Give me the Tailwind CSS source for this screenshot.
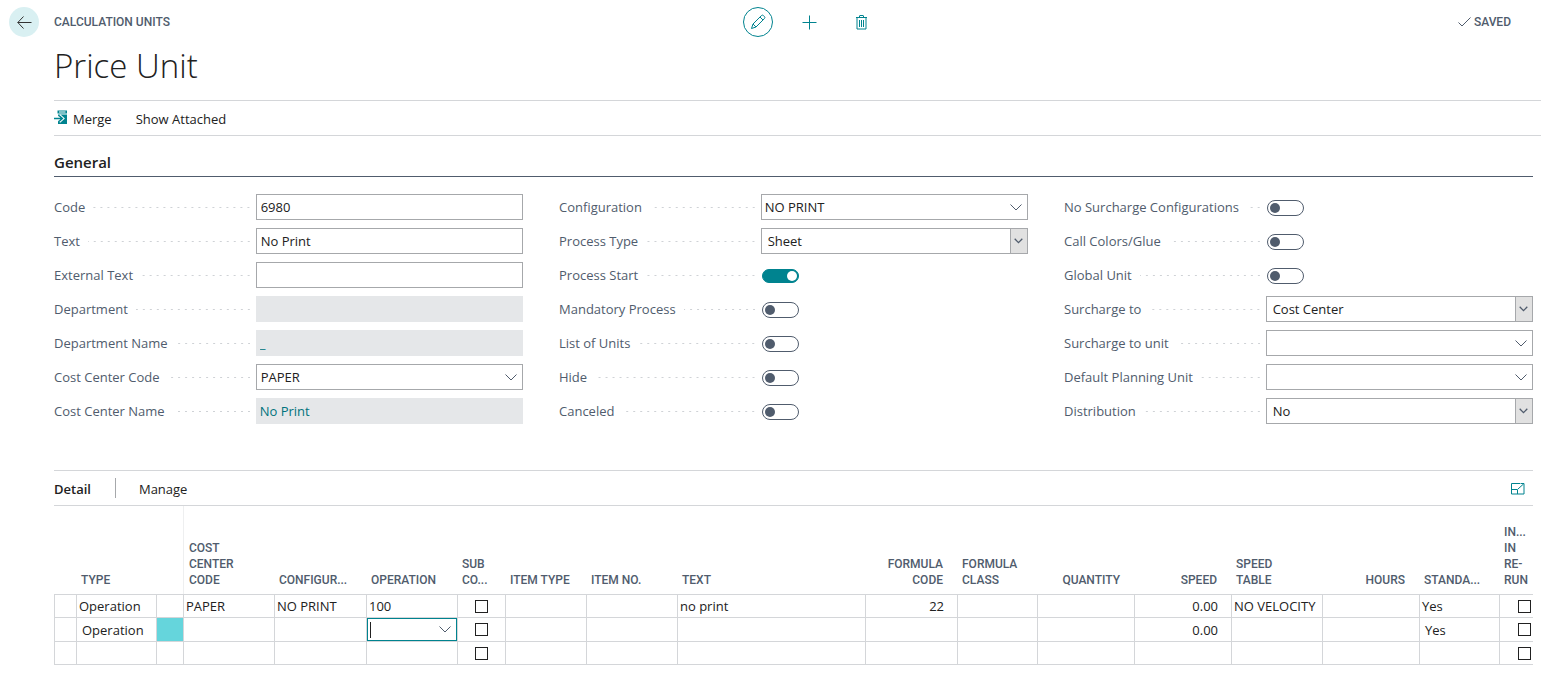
<!DOCTYPE html>
<html lang="en">
  <head>
    <meta charset="utf-8"/>
    <meta content="width=device-width, initial-scale=1.0" name="viewport"/>
    <title>Price Unit - Calculation Units</title>
    <script src="https://cdn.jsdelivr.net/npm/@tailwindcss/browser@4"></script>
  </head>
  <body class="bg-white font-['Open_Sans','Noto_Sans',sans-serif] text-[13px] leading-4 text-[#212121] overflow-x-hidden">
    <!-- Shared icons -->
    <svg class="hidden">
      <symbol id="chevron" viewBox="0 0 12 7"><path d="M.5 .5 6 6 11.5 .5" fill="none" stroke="currentColor"/></symbol>
      <symbol id="arrow" viewBox="0 0 9 6"><path d="M.7 .8 4.500 4.600 8.300 .8" fill="none" stroke="currentColor" stroke-width="1.300"/></symbol>
    </svg>

    <header class="flex items-center h-11 font-['Roboto',sans-serif] text-xs font-medium text-[#505c6d]">
      <div class="flex items-center w-[48.2%] pl-[9px] gap-[15px]">
        <button aria-label="Back" class="flex items-center justify-center size-[30px] rounded-full bg-[#d9f0f2] text-[#333]">
          <svg class="w-[15px] h-[13px]" viewBox="0 0 15 13" fill="none" stroke="currentColor"><path d="M6.500 .5.800 6.500l5.700 6M.800 6.500H14.500"/></svg>
        </button>
        <span>CALCULATION UNITS</span>
      </div>
      <div class="flex items-center gap-[22px] text-[#00838f]">
        <button aria-label="Edit" class="flex items-center justify-center size-[30px] rounded-full border border-[#00838f]">
          <svg class="size-4" viewBox="0 0 16 16" fill="none" stroke="currentColor"><path d="M1.500 14.500 3 10 11.300 1.700a1.600 1.600 0 0 1 2.300 0l.7.700a1.600 1.600 0 0 1 0 2.300L6 13zM3 10l3 3M10 3l3 3"/></svg>
        </button>
        <button aria-label="New" class="flex items-center justify-center size-[30px]">
          <svg class="size-[15px]" viewBox="0 0 15 15" fill="none" stroke="currentColor"><path d="M7.500 .5v14M.5 7.500h14"/></svg>
        </button>
        <button aria-label="Delete" class="flex items-center justify-center size-[30px]">
          <svg class="w-[13px] h-[15px]" viewBox="0 0 13 15" fill="none" stroke="currentColor"><path d="M1 2.500h11M4.500 2.500v-1.500q0-.5.5-.5h3q.5 0 .5.500v1.500M2 2.500v11.500h9v-11.500M4.500 5v7M6.500 5v7M8.500 5v7"/></svg>
        </button>
      </div>
      <div class="flex flex-1 items-center justify-end pr-[30px] gap-[3px]">
        <svg class="w-[13px] h-[10px]" viewBox="0 0 13 10" fill="none" stroke="currentColor"><path d="M.5 5.500 4 9 12.500 .5"/></svg>
        <span>SAVED</span>
      </div>
    </header>

    <main class="pl-[54px]">
      <h1 class="h-14 pt-[2px] text-[33px] leading-10 font-light">Price Unit</h1>

      <nav class="flex items-center h-9 pt-px border-y border-[#d4d6d9] gap-6">
        <button class="flex items-center gap-[5px]">
          <svg class="w-[14px] h-[15px] -mt-[2px]" viewBox="0 0 14 15"><path d="M3.500 .5h9.500v3H3.500zM4 4.500h9V14H4z" fill="#00838f"/><path d="M5 2h6.500" stroke="#fff"/><path d="M0 8.500h8M5 5.500l3.300 3L5 11.500" fill="none" stroke="#fff" stroke-width="3.500"/><path d="M0 8.500h8M5 5.500l3.300 3L5 11.500" fill="none" stroke="#00838f" stroke-width="1.500"/></svg>
          Merge
        </button>
        <button>Show Attached</button>
      </nav>

      <div class="pr-2">
        <h2 class="h-[41px] pt-4 border-b border-[#505c6d] text-[15px] leading-5 font-semibold">General</h2>

        <form class="grid grid-cols-3 gap-x-9 pt-[17px] text-[#505c6d]">
          <div class="flex flex-col gap-2">
            <div class="flex items-center h-[26px]">
              <div class="flex items-center w-[43%] pr-[6px] gap-2"><label for="code" class="whitespace-nowrap">Code</label><i class="flex-1 h-px bg-[linear-gradient(to_right,transparent_5px,#cfd2d6_5px)] bg-[length:7px_1px] bg-right"></i></div>
              <input id="code" value="6980" class="w-[57%] h-[26px] border border-[#a6a8ab] px-1 text-[#212121]"/>
            </div>
            <div class="flex items-center h-[26px]">
              <div class="flex items-center w-[43%] pr-[6px] gap-2"><label for="text" class="whitespace-nowrap">Text</label><i class="flex-1 h-px bg-[linear-gradient(to_right,transparent_5px,#cfd2d6_5px)] bg-[length:7px_1px] bg-right"></i></div>
              <input id="text" value="No Print" class="w-[57%] h-[26px] border border-[#a6a8ab] px-1 text-[#212121]"/>
            </div>
            <div class="flex items-center h-[26px]">
              <div class="flex items-center w-[43%] pr-[6px] gap-2"><label for="external" class="whitespace-nowrap">External Text</label><i class="flex-1 h-px bg-[linear-gradient(to_right,transparent_5px,#cfd2d6_5px)] bg-[length:7px_1px] bg-right"></i></div>
              <input id="external" class="w-[57%] h-[26px] border border-[#a6a8ab] px-1 text-[#212121]"/>
            </div>
            <div class="flex items-center h-[26px]">
              <div class="flex items-center w-[43%] pr-[6px] gap-2"><label for="department" class="whitespace-nowrap">Department</label><i class="flex-1 h-px bg-[linear-gradient(to_right,transparent_5px,#cfd2d6_5px)] bg-[length:7px_1px] bg-right"></i></div>
              <input id="department" readonly class="w-[57%] h-[26px] bg-[#e5e7e9] px-1"/>
            </div>
            <div class="flex items-center h-[26px]">
              <div class="flex items-center w-[43%] pr-[6px] gap-2"><label for="department-name" class="whitespace-nowrap">Department Name</label><i class="flex-1 h-px bg-[linear-gradient(to_right,transparent_5px,#cfd2d6_5px)] bg-[length:7px_1px] bg-right"></i></div>
              <input id="department-name" readonly value="_" class="w-[57%] h-[26px] bg-[#e5e7e9] px-1 text-[#00737d]"/>
            </div>
            <div class="flex items-center h-[26px]">
              <div class="flex items-center w-[43%] pr-[6px] gap-2"><label for="cost-code" class="whitespace-nowrap">Cost Center Code</label><i class="flex-1 h-px bg-[linear-gradient(to_right,transparent_5px,#cfd2d6_5px)] bg-[length:7px_1px] bg-right"></i></div>
              <div class="flex items-center w-[57%] h-[26px] border border-[#a6a8ab]">
                <input id="cost-code" value="PAPER" class="flex-1 min-w-0 px-1 text-[#212121]"/>
                <button type="button" aria-label="Choose cost center" class="px-[5px]"><svg class="w-3 h-[7px]"><use href="#chevron"/></svg></button>
              </div>
            </div>
            <div class="flex items-center h-[26px]">
              <div class="flex items-center w-[43%] pr-[6px] gap-2"><label for="cost-name" class="whitespace-nowrap">Cost Center Name</label><i class="flex-1 h-px bg-[linear-gradient(to_right,transparent_5px,#cfd2d6_5px)] bg-[length:7px_1px] bg-right"></i></div>
              <input id="cost-name" readonly value="No Print" class="w-[57%] h-[26px] bg-[#e5e7e9] px-1 text-[#00737d]"/>
            </div>
          </div>

          <div class="flex flex-col gap-2">
            <div class="flex items-center h-[26px]">
              <div class="flex items-center w-[43%] pr-[6px] gap-2"><label for="configuration" class="whitespace-nowrap">Configuration</label><i class="flex-1 h-px bg-[linear-gradient(to_right,transparent_5px,#cfd2d6_5px)] bg-[length:7px_1px] bg-right"></i></div>
              <div class="flex items-center w-[57%] h-[26px] border border-[#a6a8ab]">
                <input id="configuration" value="NO PRINT" class="flex-1 min-w-0 px-[3px] text-[#212121]"/>
                <button type="button" aria-label="Choose configuration" class="px-[5px]"><svg class="w-3 h-[7px]"><use href="#chevron"/></svg></button>
              </div>
            </div>
            <div class="flex items-center h-[26px]">
              <div class="flex items-center w-[43%] pr-[6px] gap-2"><label for="process-type" class="whitespace-nowrap">Process Type</label><i class="flex-1 h-px bg-[linear-gradient(to_right,transparent_5px,#cfd2d6_5px)] bg-[length:7px_1px] bg-right"></i></div>
              <div class="relative w-[57%]">
                <select id="process-type" class="block appearance-none w-full h-[26px] border border-[#a6a8ab] pl-[6px] text-[#212121]"><option>Sheet</option></select>
                <span class="absolute right-0 inset-y-0 flex items-center justify-center w-[18px] border border-[#a6a8ab] bg-[#e1e1e1] pointer-events-none"><svg class="w-[9px] h-[6px]"><use href="#arrow"/></svg></span>
              </div>
            </div>
            <div class="flex items-center h-[26px]">
              <div class="flex items-center w-[43%] pr-[6px] gap-2"><label for="process-start" class="whitespace-nowrap">Process Start</label><i class="flex-1 h-px bg-[linear-gradient(to_right,transparent_5px,#cfd2d6_5px)] bg-[length:7px_1px] bg-right"></i></div>
              <input id="process-start" type="checkbox" checked class="appearance-none flex items-center w-[37px] h-4 ml-px mt-px px-[2px] rounded-full border border-[#505c6d] before:size-[10px] before:rounded-full before:bg-[#505c6d] checked:justify-end checked:h-[14px] checked:border-[#00838f] checked:bg-[#00838f] checked:px-px checked:before:bg-white"/>
            </div>
            <div class="flex items-center h-[26px]">
              <div class="flex items-center w-[43%] pr-[6px] gap-2"><label for="mandatory" class="whitespace-nowrap">Mandatory Process</label><i class="flex-1 h-px bg-[linear-gradient(to_right,transparent_5px,#cfd2d6_5px)] bg-[length:7px_1px] bg-right"></i></div>
              <input id="mandatory" type="checkbox" class="appearance-none flex items-center w-[37px] h-4 ml-px mt-px px-[2px] rounded-full border border-[#505c6d] before:size-[10px] before:rounded-full before:bg-[#505c6d]"/>
            </div>
            <div class="flex items-center h-[26px]">
              <div class="flex items-center w-[43%] pr-[6px] gap-2"><label for="list-units" class="whitespace-nowrap">List of Units</label><i class="flex-1 h-px bg-[linear-gradient(to_right,transparent_5px,#cfd2d6_5px)] bg-[length:7px_1px] bg-right"></i></div>
              <input id="list-units" type="checkbox" class="appearance-none flex items-center w-[37px] h-4 ml-px mt-px px-[2px] rounded-full border border-[#505c6d] before:size-[10px] before:rounded-full before:bg-[#505c6d]"/>
            </div>
            <div class="flex items-center h-[26px]">
              <div class="flex items-center w-[43%] pr-[6px] gap-2"><label for="hide" class="whitespace-nowrap">Hide</label><i class="flex-1 h-px bg-[linear-gradient(to_right,transparent_5px,#cfd2d6_5px)] bg-[length:7px_1px] bg-right"></i></div>
              <input id="hide" type="checkbox" class="appearance-none flex items-center w-[37px] h-4 ml-px mt-px px-[2px] rounded-full border border-[#505c6d] before:size-[10px] before:rounded-full before:bg-[#505c6d]"/>
            </div>
            <div class="flex items-center h-[26px]">
              <div class="flex items-center w-[43%] pr-[6px] gap-2"><label for="canceled" class="whitespace-nowrap">Canceled</label><i class="flex-1 h-px bg-[linear-gradient(to_right,transparent_5px,#cfd2d6_5px)] bg-[length:7px_1px] bg-right"></i></div>
              <input id="canceled" type="checkbox" class="appearance-none flex items-center w-[37px] h-4 ml-px mt-px px-[2px] rounded-full border border-[#505c6d] before:size-[10px] before:rounded-full before:bg-[#505c6d]"/>
            </div>
          </div>

          <div class="flex flex-col gap-2">
            <div class="flex items-center h-[26px]">
              <div class="flex items-center w-[43%] pr-[6px] gap-2"><label for="no-surcharge" class="whitespace-nowrap">No Surcharge Configurations</label><i class="flex-1 h-px bg-[linear-gradient(to_right,transparent_5px,#cfd2d6_5px)] bg-[length:7px_1px] bg-right"></i></div>
              <input id="no-surcharge" type="checkbox" class="appearance-none flex items-center w-[37px] h-4 ml-px mt-px px-[2px] rounded-full border border-[#505c6d] before:size-[10px] before:rounded-full before:bg-[#505c6d]"/>
            </div>
            <div class="flex items-center h-[26px]">
              <div class="flex items-center w-[43%] pr-[6px] gap-2"><label for="call-colors" class="whitespace-nowrap">Call Colors/Glue</label><i class="flex-1 h-px bg-[linear-gradient(to_right,transparent_5px,#cfd2d6_5px)] bg-[length:7px_1px] bg-right"></i></div>
              <input id="call-colors" type="checkbox" class="appearance-none flex items-center w-[37px] h-4 ml-px mt-px px-[2px] rounded-full border border-[#505c6d] before:size-[10px] before:rounded-full before:bg-[#505c6d]"/>
            </div>
            <div class="flex items-center h-[26px]">
              <div class="flex items-center w-[43%] pr-[6px] gap-2"><label for="global-unit" class="whitespace-nowrap">Global Unit</label><i class="flex-1 h-px bg-[linear-gradient(to_right,transparent_5px,#cfd2d6_5px)] bg-[length:7px_1px] bg-right"></i></div>
              <input id="global-unit" type="checkbox" class="appearance-none flex items-center w-[37px] h-4 ml-px mt-px px-[2px] rounded-full border border-[#505c6d] before:size-[10px] before:rounded-full before:bg-[#505c6d]"/>
            </div>
            <div class="flex items-center h-[26px]">
              <div class="flex items-center w-[43%] pr-[6px] gap-2"><label for="surcharge-to" class="whitespace-nowrap">Surcharge to</label><i class="flex-1 h-px bg-[linear-gradient(to_right,transparent_5px,#cfd2d6_5px)] bg-[length:7px_1px] bg-right"></i></div>
              <div class="relative w-[57%]">
                <select id="surcharge-to" class="block appearance-none w-full h-[26px] border border-[#a6a8ab] pl-[6px] text-[#212121]"><option>Cost Center</option></select>
                <span class="absolute right-0 inset-y-0 flex items-center justify-center w-[18px] border border-[#a6a8ab] bg-[#e1e1e1] pointer-events-none"><svg class="w-[9px] h-[6px]"><use href="#arrow"/></svg></span>
              </div>
            </div>
            <div class="flex items-center h-[26px]">
              <div class="flex items-center w-[43%] pr-[6px] gap-2"><label for="surcharge-unit" class="whitespace-nowrap">Surcharge to unit</label><i class="flex-1 h-px bg-[linear-gradient(to_right,transparent_5px,#cfd2d6_5px)] bg-[length:7px_1px] bg-right"></i></div>
              <div class="flex items-center w-[57%] h-[26px] border border-[#a6a8ab]">
                <input id="surcharge-unit" class="flex-1 min-w-0 px-1 text-[#212121]"/>
                <button type="button" aria-label="Choose surcharge unit" class="px-[5px]"><svg class="w-3 h-[7px]"><use href="#chevron"/></svg></button>
              </div>
            </div>
            <div class="flex items-center h-[26px]">
              <div class="flex items-center w-[43%] pr-[6px] gap-2"><label for="planning-unit" class="whitespace-nowrap">Default Planning Unit</label><i class="flex-1 h-px bg-[linear-gradient(to_right,transparent_5px,#cfd2d6_5px)] bg-[length:7px_1px] bg-right"></i></div>
              <div class="flex items-center w-[57%] h-[26px] border border-[#a6a8ab]">
                <input id="planning-unit" class="flex-1 min-w-0 px-1 text-[#212121]"/>
                <button type="button" aria-label="Choose planning unit" class="px-[5px]"><svg class="w-3 h-[7px]"><use href="#chevron"/></svg></button>
              </div>
            </div>
            <div class="flex items-center h-[26px]">
              <div class="flex items-center w-[43%] pr-[6px] gap-2"><label for="distribution" class="whitespace-nowrap">Distribution</label><i class="flex-1 h-px bg-[linear-gradient(to_right,transparent_5px,#cfd2d6_5px)] bg-[length:7px_1px] bg-right"></i></div>
              <div class="relative w-[57%]">
                <select id="distribution" class="block appearance-none w-full h-[26px] border border-[#a6a8ab] pl-[6px] text-[#212121]"><option>No</option></select>
                <span class="absolute right-0 inset-y-0 flex items-center justify-center w-[18px] border border-[#a6a8ab] bg-[#e1e1e1] pointer-events-none"><svg class="w-[9px] h-[6px]"><use href="#arrow"/></svg></span>
              </div>
            </div>
          </div>
        </form>

        <!-- Detail lines -->
        <div class="flex items-center h-9 mt-[46px] pt-px border-y border-[#d4d6d9]">
          <h2 class="pr-6 font-semibold">Detail</h2>
          <button class="relative pl-6 before:absolute before:left-0 before:-top-[3px] before:h-5 before:w-px before:bg-[#a6a8ab]">Manage</button>
          <button aria-label="Expand" class="ml-auto mr-2 text-[#00838f]">
            <svg class="w-[14px] h-3" viewBox="0 0 14 12" fill="none" stroke="currentColor"><path d="M9 .5H.5v10.500h12.500V4M.5 6.500h6V11M7 6l5.500-5M9.500 .5h3.500v3.500"/></svg>
          </button>
        </div>

        <table class="w-full table-fixed border-separate border-spacing-0">
          <colgroup>
            <col class="w-[22px]"/><col class="w-[80px]"/><col class="w-[27px]"/><col class="w-[91px]"/><col class="w-[92px]"/><col class="w-[91px]"/>
            <col class="w-[48px]"/><col class="w-[81px]"/><col class="w-[91px]"/><col class="w-[188px]"/><col class="w-[92px]"/><col class="w-[80px]"/>
            <col class="w-[97px]"/><col class="w-[97px]"/><col class="w-[91px]"/><col class="w-[97px]"/><col class="w-[80px]"/><col class="w-[34px]"/>
          </colgroup>
          <thead>
            <tr class="h-[88px] text-left font-['Roboto',sans-serif] text-xs text-[#505c6d] *:p-0 *:pb-[6px] *:pl-[5px] *:align-bottom *:font-medium *:whitespace-nowrap">
              <th></th>
              <th>TYPE</th>
              <th></th>
              <th class="border-l border-[#eeeff0]">COST<br/>CENTER<br/>CODE</th>
              <th>CONFIGUR...</th>
              <th>OPERATION</th>
              <th>SUB<br/>CO...</th>
              <th>ITEM TYPE</th>
              <th>ITEM NO.</th>
              <th>TEXT</th>
              <th class="text-right pr-[14px]!">FORMULA<br/>CODE</th>
              <th>FORMULA<br/>CLASS</th>
              <th class="text-right pr-[14px]!">QUANTITY</th>
              <th class="text-right pr-[14px]!">SPEED</th>
              <th>SPEED<br/>TABLE</th>
              <th class="text-right pr-[14px]!">HOURS</th>
              <th>STANDA...</th>
              <th>IN...<br/>IN<br/>RE-<br/>RUN</th>
            </tr>
          </thead>
          <tbody class="whitespace-nowrap">
            <tr class="h-[23px] *:border-l *:border-t *:border-[#d4d6d9] *:px-[2px] *:py-0">
              <td></td>
              <td>Operation</td>
              <td></td>
              <td>PAPER</td>
              <td>NO PRINT</td>
              <td>100</td>
              <td><input type="checkbox" aria-label="Sub component" class="block appearance-none size-[13px] mx-auto border border-[#212121]"/></td>
              <td></td>
              <td></td>
              <td>no print</td>
              <td class="text-right pr-[13px]!">22</td>
              <td></td>
              <td></td>
              <td class="text-right pr-[13px]!">0.00</td>
              <td>NO VELOCITY</td>
              <td></td>
              <td>Yes</td>
              <td><input type="checkbox" aria-label="In re-run" class="block appearance-none size-[13px] ml-auto border border-[#212121]"/></td>
            </tr>
            <tr class="h-[24px] *:border-l *:border-t *:border-[#d4d6d9] *:px-[2px] *:py-0">
              <td></td>
              <td class="pl-[5px]!">Operation</td>
              <td class="bg-[#65d5dc]"></td>
              <td></td>
              <td></td>
              <td class="p-0!">
                <div class="flex items-center h-[23px] border border-[#00838f] pl-[2px]">
                  <span class="w-px h-4 bg-[#212121]"></span>
                  <input aria-label="Operation" class="flex-1 min-w-0 h-4 outline-none"/>
                  <button aria-label="Choose operation" class="px-[5px] text-[#505c6d]"><svg class="w-3 h-[7px]"><use href="#chevron"/></svg></button>
                </div>
              </td>
              <td><input type="checkbox" aria-label="Sub component" class="block appearance-none size-[13px] mx-auto border border-[#212121]"/></td>
              <td></td>
              <td></td>
              <td></td>
              <td></td>
              <td></td>
              <td></td>
              <td class="text-right pr-[13px]!">0.00</td>
              <td></td>
              <td></td>
              <td class="pl-[5px]!">Yes</td>
              <td><input type="checkbox" aria-label="In re-run" class="block appearance-none size-[13px] ml-auto border border-[#212121]"/></td>
            </tr>
            <tr class="h-[24px] *:border-l *:border-y *:border-[#d4d6d9] *:px-[2px] *:py-0">
              <td></td>
              <td></td>
              <td></td>
              <td></td>
              <td></td>
              <td></td>
              <td><input type="checkbox" aria-label="Sub component" class="block appearance-none size-[13px] mx-auto border border-[#212121]"/></td>
              <td></td>
              <td></td>
              <td></td>
              <td></td>
              <td></td>
              <td></td>
              <td></td>
              <td></td>
              <td></td>
              <td></td>
              <td><input type="checkbox" aria-label="In re-run" class="block appearance-none size-[13px] ml-auto border border-[#212121]"/></td>
            </tr>
          </tbody>
        </table>
      </div>
    </main>
  </body>
</html>
